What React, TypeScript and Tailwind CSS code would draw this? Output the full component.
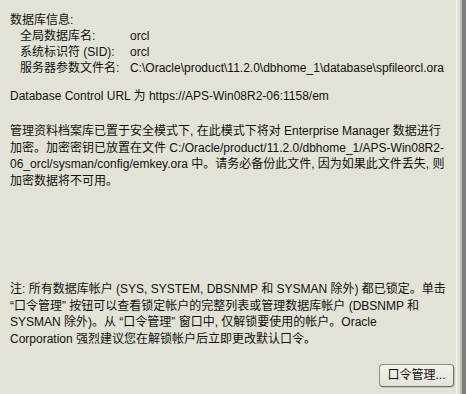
import React from 'react';

const font = { fontFamily: '"Liberation Sans", "Noto Sans CJK SC", sans-serif' };

const dbInfo = [
  { label: '全局数据库名:', value: 'orcl' },
  { label: '系统标识符 (SID):', value: 'orcl' },
  { label: '服务器参数文件名:', value: 'C:\\Oracle\\product\\11.2.0\\dbhome_1\\database\\spfileorcl.ora' },
];

const keyNote = [
  '管理资料档案库已置于安全模式下, 在此模式下将对 Enterprise Manager 数据进行',
  '加密。加密密钥已放置在文件 C:/Oracle/product/11.2.0/dbhome_1/APS-Win08R2-',
  '06_orcl/sysman/config/emkey.ora 中。请务必备份此文件, 因为如果此文件丢失, 则',
  '加密数据将不可用。',
];

const lockNote = [
  '注: 所有数据库帐户 (SYS, SYSTEM, DBSNMP 和 SYSMAN 除外) 都已锁定。单击',
  '“口令管理” 按钮可以查看锁定帐户的完整列表或管理数据库帐户 (DBSNMP 和',
  'SYSMAN 除外)。从 “口令管理” 窗口中, 仅解锁要使用的帐户。Oracle',
  'Corporation 强烈建议您在解锁帐户后立即更改默认口令。',
];

export default function App() {
  return (
    <div className="flex w-[466px] h-[394px] bg-[#e2e2d7] text-[12px] text-[#111]" style={font}>
      {/* dialog body */}
      <div className="flex-1 flex flex-col pl-[10px] pt-[12px]">
        <div className="leading-[16px]">
          <div>数据库信息:</div>
          {dbInfo.map((row) => (
            <div key={row.label} className="flex whitespace-nowrap">
              <span className="pl-[10px] w-[120px]">{row.label}</span>
              <span>{row.value}</span>
            </div>
          ))}
        </div>

        <div className="mt-[12px] leading-[16px] whitespace-nowrap">
          Database Control URL 为 https://APS-Win08R2-06:1158/em
        </div>

        <div className="mt-[19px] leading-[16.7px]">
          {keyNote.map((line) => (
            <div key={line} className="whitespace-nowrap">{line}</div>
          ))}
        </div>

        <div className="mt-[91px] leading-[16.7px]">
          {lockNote.map((line) => (
            <div key={line} className="whitespace-nowrap">{line}</div>
          ))}
        </div>

        <div className="flex justify-end mt-[16px] pr-[2px]">
          <button className="w-[75px] h-[23px] rounded-[4px] border border-[#8e8e84] border-b-[#6f6f66] border-r-[#6f6f66] bg-gradient-to-b from-[#f4f4ee] to-[#e2e2d7] text-[12px] text-[#111] shadow-[1px_1px_0_#c4c4ba]">
            口令管理...
          </button>
        </div>
      </div>

      {/* right frame edge */}
      <div className="w-px bg-[#f6f6f0]" />
      <div className="w-[3px]" />
      <div className="w-[2px] bg-[#bdbdb4]" />
      <div className="w-[4px] bg-[#7e7e7a]" />
    </div>
  );
}
